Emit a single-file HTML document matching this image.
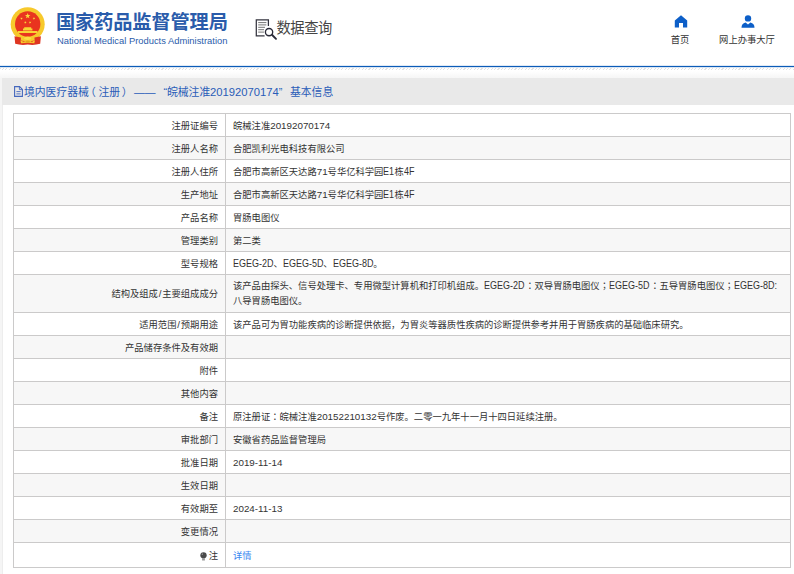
<!DOCTYPE html>
<html lang="zh-CN">
<head>
<meta charset="utf-8">
<title>境内医疗器械（注册）基本信息</title>
<style>
html,body{margin:0;padding:0;}
body{width:794px;height:574px;overflow:hidden;background:#fff;position:relative;
  font-family:"Liberation Sans","Noto Sans CJK SC",sans-serif;font-size:9.3px;color:#333;}
.abs{position:absolute;}
#hdr{position:absolute;left:0;top:0;width:794px;height:66px;background:#fff;}
#emblem{position:absolute;left:10px;top:7px;width:36px;height:39px;}
#t1{position:absolute;left:56px;top:9.3px;height:28px;line-height:28px;font-size:19.2px;font-weight:bold;color:#2a5cab;white-space:nowrap;letter-spacing:-0.1px;}
#t2{position:absolute;left:57px;top:35px;height:12px;line-height:12px;font-size:9.4px;color:#2a5cab;white-space:nowrap;}
#dq{position:absolute;left:255px;top:17px;width:24px;height:24px;}
#dqt{position:absolute;left:276.5px;top:17.5px;height:20px;line-height:20px;font-size:14.3px;color:#444;white-space:nowrap;letter-spacing:-0.45px;}
.nav{position:absolute;top:33.5px;height:12px;line-height:12px;font-size:9.3px;color:#333;white-space:nowrap;text-align:center;}
#blue{position:absolute;left:0;top:65px;width:794px;height:3px;background:linear-gradient(#dfe9f5 0,#dfe9f5 1px,#0c5cb8 1px,#0c5cb8 2px,#d9e5f3 2px,#d9e5f3 3px);}
#hatch{position:absolute;left:0;top:68px;width:794px;height:2px;
  background:repeating-linear-gradient(135deg,#e2e2e2 0,#e2e2e2 0.8px,#fff 0.8px,#fff 2.4px);}
#fade{position:absolute;left:0;top:71px;width:794px;height:7px;background:linear-gradient(#fff,#f6f6f6);}
#side{position:absolute;left:0;top:78px;width:2px;height:496px;background:#f5f5f5;border-right:1px solid #ededed;}
#bar{position:absolute;left:2px;top:78px;width:792px;height:27px;background:#e9e9e9;}
#bart{position:absolute;left:0;top:83px;height:18px;line-height:18px;font-size:10.8px;color:#2a5cb8;white-space:nowrap;}
#bart span{position:absolute;top:0;}
#bart span.p{position:relative;}
#doc{position:absolute;left:13.8px;top:86.2px;width:9px;height:11px;}
table{position:absolute;left:13px;top:113px;width:778px;border-collapse:collapse;table-layout:fixed;}
td{border:1px solid #cbcaca;padding:3.75px 7px 2.25px 7px;line-height:16px;font-size:9.3px;vertical-align:middle;height:16px;color:#333;}
td.l{width:197px;text-align:right;}
tr.g td{background:#f7f7f7;}
tr.t2 td{line-height:15.5px;}
tr.last td{padding-top:4.75px;padding-bottom:3.25px;}
.c{font-family:"Noto Sans CJK JP","Noto Sans CJK SC",sans-serif;line-height:8px;}
.n{font-size:9.8px;line-height:10px;}
.e{display:inline-block;font-size:10px;line-height:10px;white-space:nowrap;transform:scaleX(0.9);transform-origin:0 50%;vertical-align:baseline;}
a{color:#3b86f0;text-decoration:none;}
</style>
</head>
<body>
<div id="hdr">
  <svg id="emblem" viewBox="0 0 36 39">
    
    <circle cx="17.7" cy="17.3" r="17" fill="#f7c92c"/>
    <circle cx="17.7" cy="16.9" r="12.7" fill="#e9341f"/>
    <polygon points="17.70,6.10 18.38,8.06 20.46,8.10 18.80,9.36 19.40,11.35 17.70,10.16 16.00,11.35 16.60,9.36 14.94,8.10 17.02,8.06" fill="#fadb3c"/>
    <polygon points="12.20,10.29 12.01,11.27 12.87,11.79 11.87,11.92 11.65,12.89 11.22,11.98 10.22,12.07 10.95,11.38 10.56,10.46 11.44,10.94" fill="#fadb3c"/>
    <polygon points="23.30,10.29 24.06,10.94 24.94,10.46 24.55,11.38 25.28,12.07 24.28,11.98 23.85,12.89 23.63,11.92 22.63,11.79 23.49,11.27" fill="#fadb3c"/>
    <polygon points="15.54,14.02 15.70,15.01 16.69,15.21 15.79,15.66 15.91,16.66 15.20,15.95 14.29,16.37 14.75,15.48 14.06,14.74 15.05,14.90" fill="#fadb3c"/>
    <polygon points="19.86,14.02 20.35,14.90 21.34,14.74 20.65,15.48 21.11,16.37 20.20,15.95 19.49,16.66 19.61,15.66 18.71,15.21 19.70,15.01" fill="#fadb3c"/>
    <path d="M13 23.6 V21.6 H14.2 V20.3 H21.2 V21.6 H22.4 V23.6 Z M8 26.1 V24.1 H27.4 V26.1 Z" fill="#f9d435"/>
    <path d="M4.5 29.2 L10.9 30.6 V33 H24.5 V30.6 L30.9 29.2 L30.2 36.8 Q24 38.6 17.7 37.5 Q11.4 38.6 5.2 36.8 Z" fill="#df3622"/>
    <path d="M10.4 33.4 Q17.7 32 25 33.4 L24.3 36.3 Q17.7 35 11.1 36.3 Z" fill="#f7c92c"/>
    <ellipse cx="17.7" cy="31.3" rx="3.6" ry="1.6" fill="#fbdc45"/>
    <ellipse cx="17.7" cy="34.7" rx="2.4" ry="1.1" fill="#e6a21c"/>
    <path d="M12.5 34.6 H14.6 M20.8 34.6 H22.9" stroke="#df3622" stroke-width="0.7"/>
  </svg>
  <div id="t1">国家药品监督管理局</div>
  <div id="t2">National Medical Products Administration</div>
  <svg id="dq" viewBox="0 0 24 24">
    <path d="M13.4 9 V2.8 H1.3 V18.9 H9.6" fill="none" stroke="#34343f" stroke-width="1.25"/>
    <path d="M3.2 5.6 H11.4 M3.2 7.9 H11.4 M3.2 10.3 H10 M3.2 12.7 H9 M3.2 15.1 H9" stroke="#777" stroke-width="1"/>
    <circle cx="14.05" cy="15.1" r="3.65" fill="#fff" stroke="#2a2a38" stroke-width="1.35"/>
    <path d="M17.2 18 L21 21.8" stroke="#2a2a38" stroke-width="1.9" stroke-linecap="round"/>
  </svg>
  <div id="dqt">数据查询</div>
  <svg class="abs" style="left:673.8px;top:14.8px;width:14px;height:13px" viewBox="0 0 14 13">
    <path d="M7 0.3 L13.2 5.6 V12.6 H9 V8 H5 V12.6 H0.8 V5.6 Z" fill="#0d5fc8"/>
  </svg>
  <div class="nav" style="left:660px;width:40px;">首页</div>
  <svg class="abs" style="left:740.6px;top:14.6px;width:14px;height:13px" viewBox="0 0 14 13">
    <circle cx="7" cy="3.4" r="3.2" fill="#0d5fc8"/>
    <path d="M0.5 12.8 Q0.5 8.2 4.6 7.4 L7 9.6 L9.4 7.4 Q13.5 8.2 13.5 12.8 Z" fill="#0d5fc8"/>
  </svg>
  <div class="nav" style="left:712px;width:70px;">网上办事大厅</div>
</div>
<div id="blue"></div>
<div id="hatch"></div>
<div id="fade"></div>
<div id="side"></div>
<div id="bar"></div>
<svg id="doc" viewBox="0 0 9 11">
  <path d="M0.6 0.6 H5.6 L8.4 3.4 V10.4 H0.6 Z" fill="none" stroke="#4467bd" stroke-width="1.1"/>
  <path d="M5.4 0.8 V3.6 H8.2" fill="none" stroke="#4467bd" stroke-width="0.9"/>
  <path d="M2.4 5.6 H6.6 M2.4 7.9 H6.6" stroke="#4467bd" stroke-width="0.9"/>
</svg>
<div id="bart"><span style="left:24px">境内医疗器械<span class="p" style="left:-3.8px">（</span><span class="p" style="left:-1px">注册</span><span class="p" style="left:0.7px">）</span></span><span style="left:134px">——</span><span style="left:163.5px">“</span><span style="left:167px">皖械注准</span><span style="left:210px;font-size:11.25px">20192070174</span><span style="left:278.7px">”</span><span style="left:290px">基本信息</span></div>
<table>
  <tr><td class="l">注册证编号</td><td>皖械注准<span class="n">20192070174</span></td></tr>
  <tr class="g"><td class="l">注册人名称</td><td>合肥凯利光电科技有限公司</td></tr>
  <tr><td class="l">注册人住所</td><td>合肥市高新区天达路<span class="n">71</span>号华亿科学园<span class="e" style="width:11.0px">E1</span>栋<span class="e" style="width:10.5px">4F</span></td></tr>
  <tr class="g"><td class="l">生产地址</td><td>合肥市高新区天达路<span class="n">71</span>号华亿科学园<span class="e" style="width:11.0px">E1</span>栋<span class="e" style="width:10.5px">4F</span></td></tr>
  <tr><td class="l">产品名称</td><td>胃肠电图仪</td></tr>
  <tr class="g"><td class="l">管理类别</td><td>第二类</td></tr>
  <tr><td class="l">型号规格</td><td><span class="e" style="width:40.5px">EGEG-2D</span>、<span class="e" style="width:40.5px">EGEG-5D</span>、<span class="e" style="width:40.5px">EGEG-8D</span>。</td></tr>
  <tr class="g t2"><td class="l">结构及组成<span class="n" style="padding:0 0.8px">/</span>主要组成成分</td><td>该产品由探头、信号处理卡、专用微型计算机和打印机组成。<span class="e" style="width:41.2px">EGEG-2D</span><span class="c" lang="ja">：</span>双导胃肠电图仪<span class="c" lang="ja">；</span><span class="e" style="width:41.2px">EGEG-5D</span><span class="c" lang="ja">：</span>五导胃肠电图仪<span class="c" lang="ja">；</span><span class="e" style="width:43.0px">EGEG-8D:</span><br>八导胃肠电图仪。</td></tr>
  <tr><td class="l">适用范围<span class="n" style="padding:0 0.8px">/</span>预期用途</td><td>该产品可为胃功能疾病的诊断提供依据，为胃炎等器质性疾病的诊断提供参考并用于胃肠疾病的基础临床研究。</td></tr>
  <tr class="g"><td class="l">产品储存条件及有效期</td><td></td></tr>
  <tr><td class="l">附件</td><td></td></tr>
  <tr class="g"><td class="l">其他内容</td><td></td></tr>
  <tr><td class="l">备注</td><td>原注册证<span class="c" lang="ja">：</span>皖械注准<span class="n">20152210132</span>号作废。二零一九年十一月十四日延续注册。</td></tr>
  <tr class="g"><td class="l">审批部门</td><td>安徽省药品监督管理局</td></tr>
  <tr><td class="l">批准日期</td><td><span class="n">2019-11-14</span></td></tr>
  <tr class="g"><td class="l">生效日期</td><td></td></tr>
  <tr><td class="l">有效期至</td><td><span class="n">2024-11-13</span></td></tr>
  <tr class="g"><td class="l">变更情况</td><td></td></tr>
  <tr class="last"><td class="l"><svg style="vertical-align:-1.8px;margin-right:2px" width="7" height="9" viewBox="0 0 7 9"><circle cx="3.5" cy="3.3" r="3.15" fill="#4a4a4a"/><circle cx="2.3" cy="2.1" r="0.7" fill="#bbb"/><rect x="2.1" y="6.2" width="2.8" height="2.3" fill="#999"/></svg>注</td><td><a>详情</a></td></tr>
</table>
</body>
</html>
